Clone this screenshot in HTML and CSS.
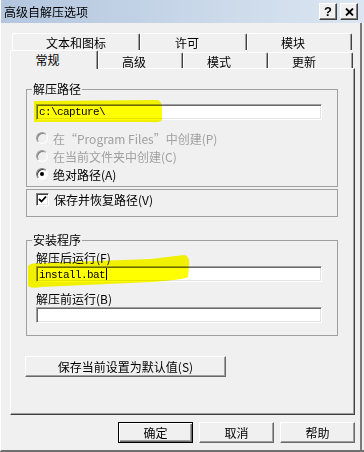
FILE: index.html
```html
<!DOCTYPE html>
<html lang="zh-CN">
<head>
    <meta charset="utf-8">
    <title>高级自解压选项</title>
    <link rel="stylesheet" href="styles.css">
</head>
<body>
    <div class="window">
        <div class="titlebar">
            <span class="title">高级自解压选项</span>
            <div class="caption">
                <span class="cbtn">?</span>
                <span class="cbtn">
                    <svg width="9" height="8" viewBox="0 0 9 8"><path d="M1 0.5 L8 7.5 M8 0.5 L1 7.5" stroke="#000" stroke-width="1.8"/></svg>
                </span>
            </div>
        </div>

        <div class="main">
            <div class="tabrow back">
                <div class="tab first">文本和图标</div>
                <div class="tab">许可</div>
                <div class="tab">模块</div>
            </div>
            <div class="tabrow front">
                <div class="tab active">常规</div>
                <div class="tab">高级</div>
                <div class="tab">模式</div>
                <div class="tab">更新</div>
            </div>

            <div class="panel">
                <fieldset class="group">
                    <legend>解压路径</legend>
                    <div class="field first-field">c:\capture\</div>
                    <div class="opt disabled first-opt"><span class="radio"></span>在“Program Files”中创建(P)</div>
                    <div class="opt disabled"><span class="radio"></span>在当前文件夹中创建(C)</div>
                    <div class="opt"><span class="radio on"></span>绝对路径(A)</div>
                </fieldset>

                <fieldset class="group plain">
                    <div class="opt">
                        <span class="check">
                            <svg width="9" height="9" viewBox="0 0 9 9"><polyline points="1,4 3.5,6.5 8,1.5" fill="none" stroke="#000" stroke-width="1.8"/></svg>
                        </span>保存并恢复路径(V)
                    </div>
                </fieldset>

                <fieldset class="group install">
                    <legend>安装程序</legend>
                    <div class="label first-label">解压后运行(F)</div>
                    <div class="field">install.bat<span class="caret"></span></div>
                    <div class="label">解压前运行(B)</div>
                    <div class="field"></div>
                </fieldset>

                <button class="btn wide">保存当前设置为默认值(S)</button>
            </div>

            <div class="footer">
                <button class="btn default">确定</button>
                <button class="btn">取消</button>
                <button class="btn">帮助</button>
            </div>
        </div>

        <!-- marker strokes drawn over the screenshot -->
        <svg class="marker" width="364" height="452" viewBox="0 0 364 452">
            <path d="M33 101 L157 100 Q161 101 161 110 L161 120 Q158 123 150 122 L33 122 Z" fill="#ffff00"/>
            <path d="M27 266 Q29 263 40 263 L150 259 L183 255 Q189 256 188 265 L187 277 Q181 280 150 282 L40 287 Q28 289 27 285 Z" fill="#ffff00"/>
        </svg>
    </div>
</body>
</html>
```

FILE: styles.css
```css
body{
    margin: 0;
    background-color: #f0f0f0;
    font-family: "Noto Sans CJK SC", sans-serif;
    font-size: 12px;
    color: #000;
}

.window{
    position: relative;
    width: 364px;
    height: 452px;
    box-sizing: border-box;
    border-left: 1px solid #fff;
    border-bottom: 2px solid #6f6f6f;
}

.titlebar{
    height: 23px;
    display: flex;
    align-items: center;
    justify-content: space-between;
    padding: 0 6px 0 3px;
    background: linear-gradient(to right, #b3c6de, #dbe6f2);
}

.title{line-height: 14px;}

.caption{
    display: flex;
    gap: 3px;
}

.cbtn{
    width: 18px;
    height: 17px;
    box-sizing: border-box;
    display: flex;
    align-items: center;
    justify-content: center;
    background-color: #f0f0f0;
    border: 1px solid;
    border-color: #fff #404040 #404040 #fff;
    box-shadow: inset -1px -1px 0 #808080;
    font: bold 13px "Liberation Sans", sans-serif;
}

.main{
    width: 361px;
    height: 427px;
    box-sizing: border-box;
    padding: 10px 5px 0 9px;
    border-right: 2px solid #7a7a7a;
}

/* tabs */
.tabrow{display: flex;}

.tabrow.back{
    height: 17px;
    margin-left: 2px;
}

.tabrow.front{
    height: 18px;
    align-items: flex-end;
}

.tab{
    box-sizing: border-box;
    text-align: center;
    padding-right: 13px;
    border-top: 1px solid #fff;
    border-left: 1px solid #fff;
    border-right: 1px solid #404040;
    border-radius: 2px 2px 0 0;
    box-shadow: inset -1px 0 0 #a0a0a0;
}

.back .tab{
    height: 17px;
    padding-top: 1px;
    line-height: 15px;
    width: 107px;
}
.back .tab.first{width: 128px; padding-right: 0;}
.back .tab:last-child{width: 105px;}

.front .tab{
    width: 85px;
    height: 16px;
    padding-top: 2px;
    line-height: 13px;
}

.front .tab.active{
    width: 88px;
    height: 19px;
    padding-top: 0;
    line-height: 18px;
    margin-bottom: -1px;
    position: relative;
    z-index: 1;
    background-color: #f0f0f0;
}

/* panel */
.panel{
    width: 345px;
    height: 347px;
    box-sizing: border-box;
    padding: 13px 0 0 15px;
    border: 1px solid;
    border-color: #fff #404040 #404040 #fff;
    box-shadow: inset -1px -1px 0 #a0a0a0;
}

.group{
    width: 312px;
    box-sizing: border-box;
    margin: 0;
    padding: 0 0 3px 9px;
    border: 1px solid #a0a0a0;
}

.group legend{
    margin-left: -4px;
    padding: 0 1px;
    line-height: 14px;
}

.group.plain{
    margin-top: 2px;
    padding-top: 0;
    padding-bottom: 8px;
}

.group.install{
    margin-top: 16px;
    padding-bottom: 12px;
}

.field{
    width: 286px;
    height: 16px;
    box-sizing: border-box;
    padding: 1px 0 0 2px;
    background-color: #fff;
    border: 1px solid;
    border-color: #a0a0a0 #fff #fff #a0a0a0;
    box-shadow: inset 1px 1px 0 #696969, inset -1px -1px 0 #e3e3e3;
    font-family: "Liberation Mono", monospace;
    font-size: 11px;
    letter-spacing: -0.6px;
    line-height: 13px;
}

.first-field{margin-top: 8px;}

.caret{
    display: inline-block;
    width: 1px;
    height: 12px;
    margin-left: 1px;
    background-color: #000;
    vertical-align: -2px;
}

.opt{
    height: 18px;
    display: flex;
    align-items: center;
    gap: 5px;
}

.first-opt{margin-top: 9px;}

.opt.disabled{color: #a0a0a0;}

.radio{
    width: 12px;
    height: 12px;
    box-sizing: border-box;
    border-radius: 50%;
    border: 1px solid;
    border-color: #808080 #fff #fff #808080;
    box-shadow: inset 1px 1px 0 #404040;
    background-color: #fff;
    display: flex;
    align-items: center;
    justify-content: center;
}

.disabled .radio{
    background-color: #f0f0f0;
    border-color: #a0a0a0 #fff #fff #a0a0a0;
    box-shadow: inset 1px 1px 0 #808080;
}

.radio.on::after{
    content: "";
    width: 4px;
    height: 4px;
    border-radius: 50%;
    background-color: #000;
}

.check{
    width: 13px;
    height: 13px;
    box-sizing: border-box;
    border: 1px solid;
    border-color: #808080 #fff #fff #808080;
    box-shadow: inset 1px 1px 0 #404040, inset -1px -1px 0 #e3e3e3;
    background-color: #fff;
    display: flex;
    align-items: center;
    justify-content: center;
}

.label{
    line-height: 16px;
    margin-top: 9px;
}
.first-label{margin-top: 3px;}

/* buttons */
.btn{
    height: 21px;
    box-sizing: border-box;
    padding: 0;
    background-color: #f0f0f0;
    border: 1px solid;
    border-color: #fff #696969 #696969 #fff;
    box-shadow: inset -1px -1px 0 #a0a0a0;
    font-family: "Noto Sans CJK SC", sans-serif;
    font-size: 12px;
    line-height: 18px;
    color: #000;
}

.btn.wide{
    display: block;
    width: 201px;
    margin: 20px 0 0 -1px;
}

.btn.default{
    border-color: #000;
    box-shadow: inset 1px 1px 0 #fff, inset -1px -1px 0 #696969, inset -2px -2px 0 #a0a0a0;
}

.footer{
    display: flex;
    justify-content: flex-end;
    gap: 6px;
    margin-top: 7px;
}

.footer .btn{width: 75px;}

.marker{
    position: absolute;
    left: 0;
    top: 0;
    mix-blend-mode: multiply;
    pointer-events: none;
}
```
